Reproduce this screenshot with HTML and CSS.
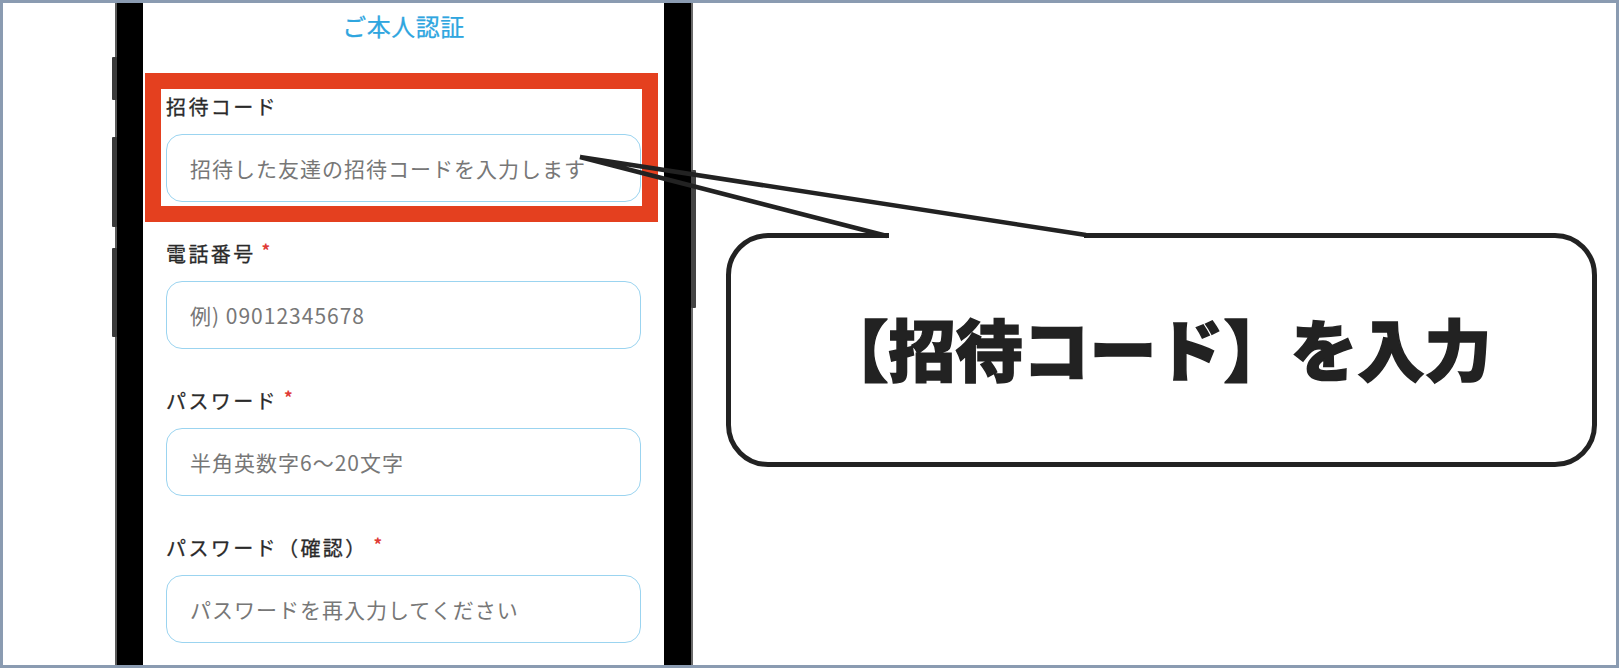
FILE: index.html
```html
<!DOCTYPE html>
<html lang="ja">
<head>
<meta charset="utf-8">
<title>ご本人認証</title>
<link rel="stylesheet" href="styles.css">
</head>
<body>
<div class="frame">
  <div class="phone">
    <span class="btn btn-l1"></span>
    <span class="btn btn-l2"></span>
    <span class="btn btn-l3"></span>
    <span class="btn btn-r1"></span>
    <div class="screen">
      <div class="title">ご本人認証</div>
      <div class="field first">
        <div class="label">招待コード</div>
        <div class="input">招待した友達の招待コードを入力します</div>
      </div>
      <div class="field">
        <div class="label">電話番号<span class="req">*</span></div>
        <div class="input">例) 09012345678</div>
      </div>
      <div class="field">
        <div class="label">パスワード<span class="req">*</span></div>
        <div class="input">半角英数字6〜20文字</div>
      </div>
      <div class="field">
        <div class="label">パスワード（確認）<span class="req">*</span></div>
        <div class="input">パスワードを再入力してください</div>
      </div>
      <div class="highlight"></div>
    </div>
  </div>
  <div class="bubble">
    <span class="bubble-text">【招待コード】を入力</span>
  </div>
  <svg class="tail" width="1619" height="668" viewBox="0 0 1619 668" xmlns="http://www.w3.org/2000/svg">
    <rect x="889" y="228" width="195" height="12" fill="#ffffff"/>
    <polyline points="887,236 580,157 1086,235" fill="none" stroke="#222222" stroke-width="4.5" stroke-linejoin="miter" stroke-miterlimit="20"/>
  </svg>
</div>
</body>
</html>
```

FILE: styles.css
```css
* { box-sizing: border-box; }

html, body {
  margin: 0;
  padding: 0;
  background: #ffffff;
}

body {
  font-family: "Noto Sans CJK JP", "Noto Sans", sans-serif;
}

.frame {
  position: relative;
  width: 1619px;
  height: 668px;
  border: 3px solid #8a9bb1;
  background: #ffffff;
  display: flex;
  align-items: flex-start;
  overflow: hidden;
}

/* phone */
.phone {
  position: relative;
  align-self: stretch;
  margin-left: 114px;
  width: 574px;
  border-left: 26px solid #000000;
  border-right: 27px solid #000000;
  box-shadow: -2px 0 0 #5a5a5a, 2px 0 0 #6a6a6a;
  display: flex;
  flex-direction: column;
}

.btn {
  position: absolute;
  width: 5px;
  background: #3a3a3a;
  border-radius: 1px;
}
.btn-l1 { left: -31px; top: 54px; height: 43px; }
.btn-l2 { left: -31px; top: 134px; height: 90px; }
.btn-l3 { left: -31px; top: 245px; height: 89px; }
.btn-r1 { right: -32px; top: 167px; height: 138px; background: #444444; }

.screen {
  position: relative;
  flex: 1;
  background: #ffffff;
  padding: 8px 23px 0 23px;
  display: flex;
  flex-direction: column;
}

.title {
  text-align: center;
  font-size: 24px;
  line-height: 30px;
  font-weight: 400;
  color: #2fa6df;
  letter-spacing: 0.5px;
  -webkit-text-stroke: 0.25px #2fa6df;
}

.field {
  display: flex;
  flex-direction: column;
  gap: 13px;
  margin-top: 38px;
}
.field.first { margin-top: 52px; }

.label {
  font-size: 20px;
  line-height: 28px;
  font-weight: 400;
  color: #2a2a2a;
  letter-spacing: 2.4px;
  white-space: nowrap;
  -webkit-text-stroke: 0.3px #2a2a2a;
}

.req {
  color: #e03a36;
  font-size: 17px;
  font-weight: 700;
  vertical-align: top;
  line-height: 20px;
  margin-left: 6px;
  -webkit-text-stroke: 0;
}

.input {
  height: 68px;
  border: 1.5px solid #9bd4f0;
  border-radius: 16px;
  padding-left: 23px;
  display: flex;
  align-items: center;
  font-size: 21px;
  letter-spacing: 1px;
  color: #777777;
  white-space: nowrap;
}

.highlight {
  position: absolute;
  left: 2px;
  top: 70px;
  width: 513px;
  height: 149px;
  border: 16px solid #e4401f;
}

/* callout */
.bubble {
  margin-left: 35px;
  margin-top: 230px;
  width: 871px;
  height: 234px;
  border: 5px solid #222222;
  border-radius: 42px;
  display: flex;
  align-items: center;
  justify-content: center;
  padding-bottom: 8px;
  padding-right: 10px;
}

.bubble-text {
  font-size: 67px;
  line-height: 1;
  font-weight: 900;
  color: #222222;
  white-space: nowrap;
  -webkit-text-stroke: 1.5px #222222;
}

.tail {
  position: absolute;
  left: -3px;
  top: -3px;
  pointer-events: none;
}
```
